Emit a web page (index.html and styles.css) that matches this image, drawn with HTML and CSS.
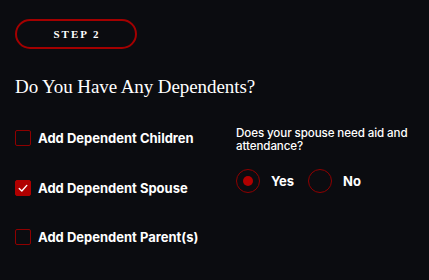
FILE: index.html
```html
<!DOCTYPE html>
<html lang="en">
<head>
<meta charset="utf-8">
<link rel="stylesheet" href="styles.css">
</head>
<body>
<main class="page">
  <div class="pill">STEP 2</div>
  <h1 class="title">Do You Have Any Dependents?</h1>
  <div class="columns">
    <div class="checks">
      <label class="check">
        <span class="box"></span>
        <span class="label">Add Dependent Children</span>
      </label>
      <label class="check">
        <span class="box checked">
          <svg viewBox="0 0 16 16" width="16" height="16"><path d="M4.2 8.6 L6.8 11 L11.8 5.4" fill="none" stroke="#fff" stroke-width="1.4" stroke-linecap="round" stroke-linejoin="round"/></svg>
        </span>
        <span class="label">Add Dependent Spouse</span>
      </label>
      <label class="check">
        <span class="box"></span>
        <span class="label">Add Dependent Parent(s)</span>
      </label>
    </div>
    <div class="question">
      <p class="q-text">Does your spouse need aid and attendance?</p>
      <div class="radios">
        <label class="radio"><span class="circle selected"><span class="dot"></span></span><span class="r-label">Yes</span></label>
        <label class="radio"><span class="circle"></span><span class="r-label">No</span></label>
      </div>
    </div>
  </div>
</main>
</body>
</html>
```

FILE: styles.css
```css
html, body {
  margin: 0;
  padding: 0;
  background: #0b0c10;
}
.page {
  padding: 19px 15px 0 15px;
  color: #fff;
  font-family: Inter, "Open Sans", sans-serif;
}
.pill {
  box-sizing: border-box;
  width: 122px;
  height: 30px;
  border: 2px solid #a30000;
  border-radius: 15px;
  display: flex;
  align-items: center;
  justify-content: center;
  font-family: "Liberation Serif", serif;
  font-weight: bold;
  font-size: 11px;
  letter-spacing: 2px;
  padding-left: 2px;
  color: #fff;
}
.title {
  margin: 27px 0 0 0;
  font-family: "Liberation Serif", serif;
  font-weight: normal;
  font-size: 19px;
  line-height: 22px;
  letter-spacing: -0.08px;
}
.columns {
  display: flex;
  margin-top: 32px;
}
.checks {
  flex: 0 0 221px;
  display: flex;
  flex-direction: column;
  gap: 33.5px;
}
.check {
  display: flex;
  align-items: center;
  height: 16px;
  gap: 7px;
}
.box {
  box-sizing: border-box;
  flex: 0 0 16px;
  width: 16px;
  height: 16px;
  border: 1px solid #8f0000;
  border-radius: 2px;
  display: flex;
}
.box.checked {
  background: #b00000;
  border-color: #b00000;
}
.box svg {
  margin: -1px;
}
.label {
  font-weight: 700;
  font-size: 13px;
  letter-spacing: 0px;
  white-space: nowrap;
}
.question {
  display: flex;
  flex-direction: column;
}
.q-text {
  margin: -3px 0 0 0;
  font-size: 11.6px;
  font-weight: 500;
  line-height: 13px;
  letter-spacing: -0.1px;
  width: 185px;
}
.radios {
  display: flex;
  align-items: center;
  margin-top: 16px;
  gap: 14px;
}
.radio {
  display: flex;
  align-items: center;
  gap: 11px;
}
.circle {
  box-sizing: border-box;
  width: 24px;
  height: 24px;
  border: 1.5px solid #8f0000;
  border-radius: 50%;
  display: flex;
  align-items: center;
  justify-content: center;
}
.dot {
  width: 10px;
  height: 10px;
  border-radius: 50%;
  background: #b00000;
}
.r-label {
  font-weight: 700;
  font-size: 13px;
}
```
